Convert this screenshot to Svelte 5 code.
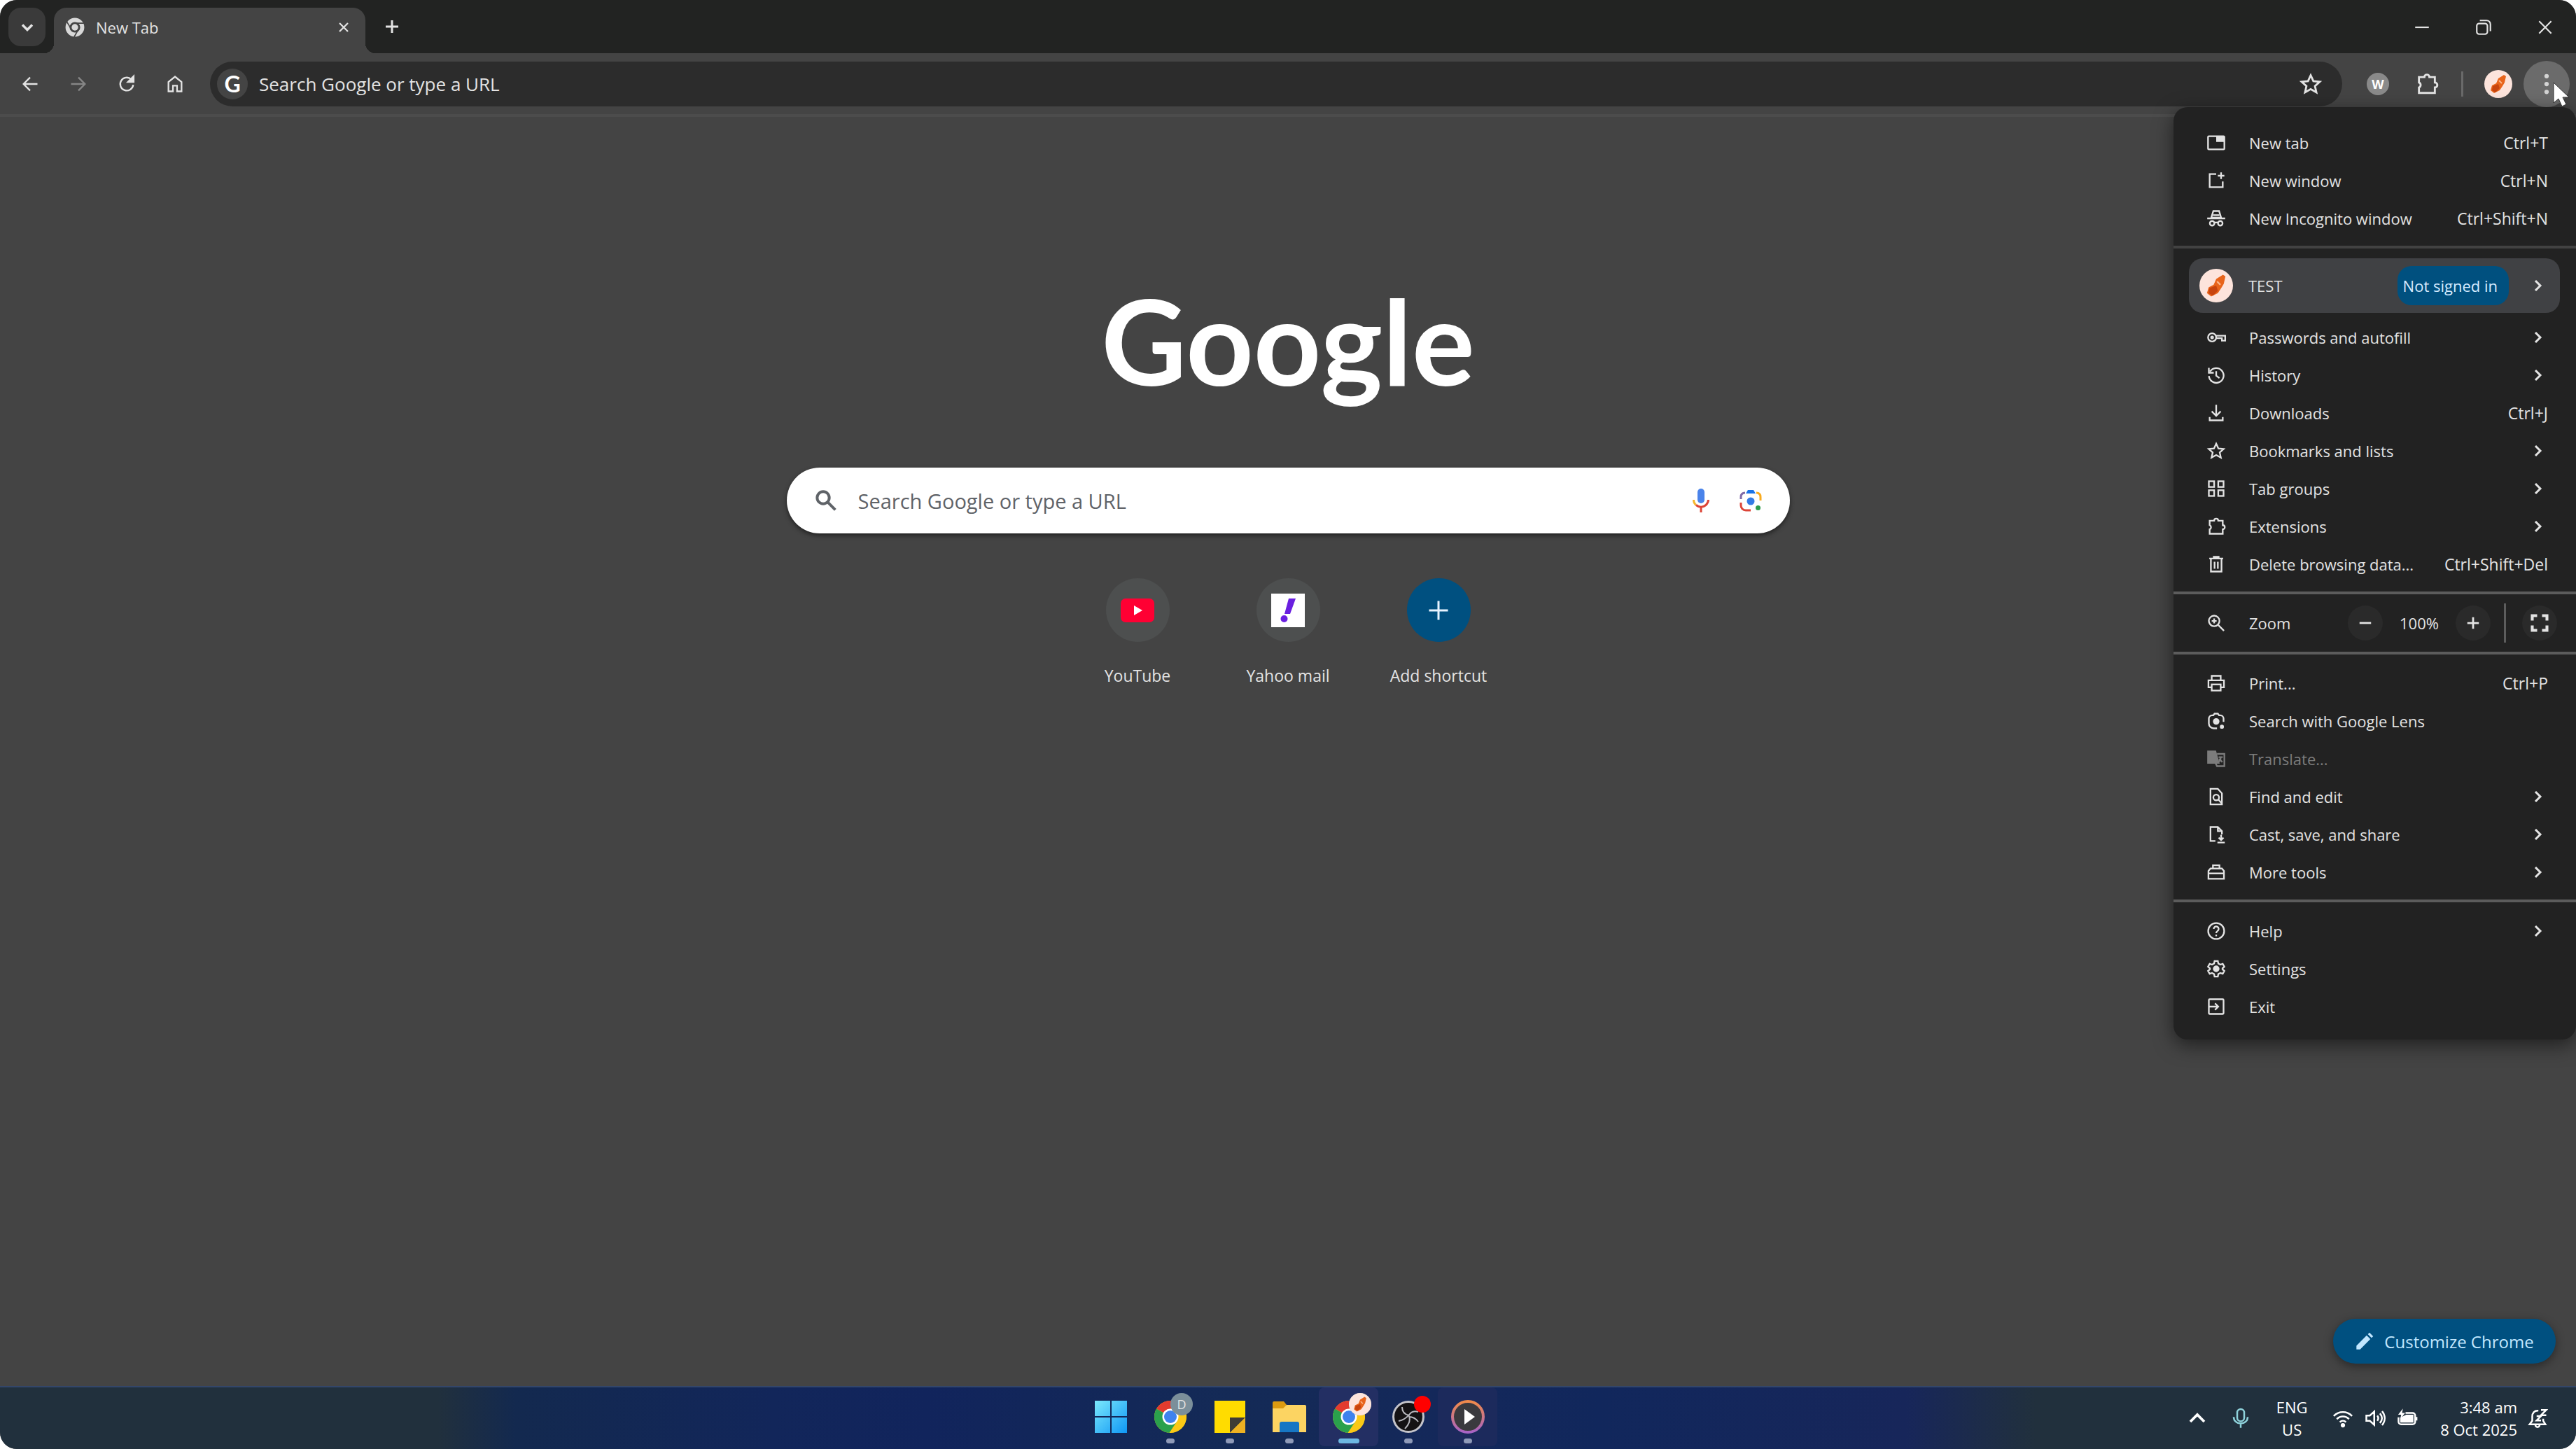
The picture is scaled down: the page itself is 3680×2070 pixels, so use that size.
<script lang="ts">
  type Item = {
    icon: string;
    label: string;
    keys?: string;
    sub?: boolean;
    disabled?: boolean;
  };

  // 24x24 outlines, drawn with the current text colour
  const icons: Record<string, string> = {
    down: "<path d='M6 9l6 6 6-6'/>",
    up: "<path d='M4 16l8-8 8 8'/>",
    right: "<path d='M8 5l7 7-7 7'/>",
    close: "<path d='M4 4l16 16M20 4L4 20'/>",
    plus: "<path d='M12 3v18M3 12h18'/>",
    minus: "<path d='M3 12h18'/>",
    restore:
      "<rect x='3' y='7' width='14' height='14' rx='3'/><path d='M7 3h9a5 5 0 0 1 5 5v9'/>",
    back: "<path d='M21 12H4M12 4l-8 8 8 8'/>",
    forward: "<path d='M3 12h17M12 4l8 8-8 8'/>",
    reload:
      "<path d='M20 13a8 8 0 1 1-2.5-6.8L20 8.500'/><path d='M20.500 2.500v7h-7z' fill='currentColor'/>",
    home: "<path d='M4 21V9.500L12 3l8 6.500V21h-5.500v-7h-5v7z'/>",
    star: "<path d='M12 3.200l2.700 5.900 6.400.7-4.800 4.300 1.400 6.300L12 17.200l-5.700 3.200 1.400-6.300L2.900 9.800l6.400-.7z'/>",
    puzzle:
      "<path d='M4 5h5.500a2.500 2.500 0 0 1 5 0H20v5.500a2.500 2.500 0 0 1 0 5V21H4v-5.500a2.700 2.700 0 0 0 0-5z'/>",
    tab: "<rect x='2' y='4' width='20' height='16' rx='1'/><path d='M13 5h8v5h-8z' fill='currentColor'/>",
    window: "<path d='M12 4H4v16h16v-7M18 2v8M14 6h8'/>",
    incognito:
      "<path d='M1 12h22M6 11l2.500-8h7L18 11z'/><path d='M8 8h8'/><circle cx='7' cy='18' r='2.800'/><circle cx='17' cy='18' r='2.800'/><path d='M10 17h4'/>",
    key: "<circle cx='7' cy='12' r='5'/><circle cx='7' cy='12' r='1.200'/><path d='M12 10h11v6h-4v-3h-7.500'/>",
    history:
      "<path d='M4.500 7.500a9 9 0 1 1-1.400 5.500M3 3v6h6M12 7v5.500l4 3'/>",
    download: "<path d='M12 2v13M6.500 10l5.500 5.500 5.500-5.500M4 17v4h16v-4'/>",
    groups:
      "<rect x='3' y='3' width='6.500' height='7'/><rect x='14.500' y='3' width='6.500' height='7'/><rect x='3' y='14' width='6.500' height='7'/><rect x='14.500' y='14' width='6.500' height='7'/>",
    trash:
      "<path d='M3.500 5h17M9 4.500V3h6v1.500M5.500 5v16h13V5M10 9v8.500M14 9v8.500'/>",
    zoom: "<circle cx='9.500' cy='9.500' r='6.500'/><path d='M14.500 14.500l7 7M6.500 9.500h6M9.500 6.500v6'/>",
    full: "<path d='M3 9V3h6M15 3h6v6M21 15v6h-6M9 21H3v-6' stroke-width='3.500'/>",
    print:
      "<path d='M6.500 8V3h11v5M6 17H2.500V8.500h19V17H18'/><rect x='6.500' y='13.500' width='11' height='7.500'/>",
    lens: "<path d='M3 15V9a4 4 0 0 1 4-4h1.500L10 3h4l1.500 2H17a4 4 0 0 1 4 4v4M3 15a6 6 0 0 0 6 6h4'/><circle cx='12' cy='12.500' r='3' fill='currentColor'/><circle cx='19' cy='19' r='1.500' fill='currentColor'/>",
    translate:
      "<path d='M2 3h9l4 14H2z' fill='currentColor'/><path d='M13 6h9v15h-9l-2-4M15 10h5M17.500 9v1.500c0 3-2 5-3.500 6M15.500 12l4 4'/>",
    find: "<path d='M14 2.500H5v19h14V8z'/><circle cx='12' cy='13' r='3.500'/><path d='M14.500 15.500l4.500 5'/>",
    cast: "<path d='M11 20H5V3h9l5 5v4M14 3v5h5M18 12.500v6M15 16l3 3 3-3M13.500 22h9'/>",
    tools:
      "<path d='M2.500 20V10.500L5 7.500h14l2.500 3V20zM8 7V3.500h8V7M3 13.500h18' />",
    help: "<circle cx='12' cy='12' r='9.800'/><path d='M9 9.500a3 3 0 1 1 4.700 2.400c-1.200.9-1.700 1.300-1.700 2.600M12 16.500v2'/>",
    gear: "<path d='M10 2.500h4l.6 3 2.500 1.400 2.900-1 2 3.500-2.300 2v1.200l2.300 2-2 3.500-2.900-1-2.500 1.400-.6 3h-4l-.6-3-2.500-1.400-2.900 1-2-3.500 2.300-2v-1.200l-2.300-2 2-3.500 2.900 1 2.500-1.400z'/><circle cx='12' cy='12' r='3' fill='currentColor'/>",
    exit: "<rect x='3' y='3' width='18' height='18' rx='1'/><path d='M3 12h11M10.500 8l4 4-4 4'/>",
    search: "<circle cx='9' cy='9' r='6.500'/><path d='M14 14l8 8'/>",
    pencil:
      "<path d='M2 22v-4.500L14.500 5 19 9.500 6.500 22zM16 3.500L18 1.500l4.500 4.500-2 2z' fill='currentColor' stroke='none'/>",
    mic: "<rect x='8' y='1.500' width='8' height='14' rx='4'/><path d='M4 10.500c0 4.500 3.500 7.500 8 7.500s8-3 8-7.500M12 18v5'/>",
    wifi: "<path d='M1.500 9.500c6-6 15-6 21 0M5 13c4-4 10-4 14 0M8.500 16.500c2-2 5-2 7 0'/><circle cx='12' cy='20' r='1.500' fill='currentColor'/>",
    sound:
      "<path d='M2 9v6h4l5 4.500v-15L6 9zM14.500 9c1.500 2 1.500 4 0 6M17.500 6.500c3 3.500 3 7.500 0 11M20 4c4 5 4 11 0 16'/>",
    battery:
      "<path d='M10 6h8a3 3 0 0 1 3 3v7a3 3 0 0 1-3 3H5a3 3 0 0 1-3-3v-5M22.500 10.500v4'/><path d='M5 16v-4l6-3h7v7z' fill='currentColor'/><path d='M7 1L1.500 8H5l-1 5 5.500-7H6z' fill='currentColor' stroke='none'/>",
    bell: "<path d='M13 3.500C8.500 3 6 6 6 10v5l-3 4h18l-2.500-4v-2.500M9.500 19.500c.5 3.500 4.500 3.500 5 0M16 2.500h6l-6 6h6M11 9.500h5l-5 5h5'/>",
  };

  const groups: Item[][] = [
    [
      { icon: "tab", label: "New tab", keys: "Ctrl+T" },
      { icon: "window", label: "New window", keys: "Ctrl+N" },
      { icon: "incognito", label: "New Incognito window", keys: "Ctrl+Shift+N" },
    ],
    [
      { icon: "key", label: "Passwords and autofill", sub: true },
      { icon: "history", label: "History", sub: true },
      { icon: "download", label: "Downloads", keys: "Ctrl+J" },
      { icon: "star", label: "Bookmarks and lists", sub: true },
      { icon: "groups", label: "Tab groups", sub: true },
      { icon: "puzzle", label: "Extensions", sub: true },
      { icon: "trash", label: "Delete browsing data...", keys: "Ctrl+Shift+Del" },
    ],
    [
      { icon: "print", label: "Print...", keys: "Ctrl+P" },
      { icon: "lens", label: "Search with Google Lens" },
      { icon: "translate", label: "Translate...", disabled: true },
      { icon: "find", label: "Find and edit", sub: true },
      { icon: "cast", label: "Cast, save, and share", sub: true },
      { icon: "tools", label: "More tools", sub: true },
    ],
    [
      { icon: "help", label: "Help", sub: true },
      { icon: "gear", label: "Settings" },
      { icon: "exit", label: "Exit" },
    ],
  ];

  let zoom = 100;
  let address = "";
  let query = "";
</script>

{#snippet icon(name: string)}
  <svg class="icon" viewBox="0 0 24 24" aria-hidden="true">{@html icons[name]}</svg>
{/snippet}

{#snippet avatar()}
  <svg class="avatar" viewBox="0 0 40 40" aria-hidden="true">
    <circle cx="20" cy="20" r="20" fill="#fde4dc" />
    <path d="M20 12l8-5 3 2-2 9-3 5-4 6-8 4-5-4 2-7 6-3z" fill="#e8641b" />
    <path d="M12 23l8-3 2 6-6 6-5-3z" fill="#c8440e" />
    <path d="M21 15l4 4" stroke="#fbb58a" stroke-width="2" />
  </svg>
{/snippet}

{#snippet row(item: Item)}
  <button class="row" role="menuitem" disabled={item.disabled}>
    {@render icon(item.icon)}
    <span class="label">{item.label}</span>
    {#if item.keys}
      <span class="keys">{item.keys}</span>
    {/if}
    {#if item.sub}
      <span class="chevron">{@render icon("right")}</span>
    {/if}
  </button>
{/snippet}

{#snippet chrome()}
  <svg class="app-icon" viewBox="0 0 48 48" aria-hidden="true">
    <circle cx="24" cy="24" r="23" fill="#fbc916" />
    <path d="M24 24L4.100 12.500A23 23 0 0 1 43.900 12.500H24z" fill="#e33b2e" />
    <path d="M24 24L4.100 12.500a23 23 0 0 0 18.500 34.400L34 30z" fill="#2aa14c" />
    <path d="M24 12.500h19.900a23 23 0 0 1-21.300 34.400L34 29.700z" fill="#fbc916" />
    <circle cx="24" cy="24" r="11.500" fill="#fff" />
    <circle cx="24" cy="24" r="9" fill="#3f82ee" />
  </svg>
{/snippet}

<div class="screen">
  <header class="tabs">
    <button class="tab-search" aria-label="Search tabs">{@render icon("down")}</button>
    <div class="tab">
      <svg class="favicon" viewBox="0 0 24 24" aria-hidden="true">
        <circle cx="12" cy="12" r="9" fill="none" stroke="#d8d8d8" stroke-width="5" />
        <path d="M12 7h11M7.700 14.500L2 5M16.300 14.500L11 24" stroke="#444" stroke-width="1.500" />
        <circle cx="12" cy="12" r="4" fill="#d8d8d8" />
      </svg>
      <span class="label">New Tab</span>
      <button class="tab-close" aria-label="Close tab">{@render icon("close")}</button>
    </div>
    <button class="tab-add" aria-label="New tab">{@render icon("plus")}</button>
    <div class="caption">
      <button aria-label="Minimize">{@render icon("minus")}</button>
      <button aria-label="Restore">{@render icon("restore")}</button>
      <button aria-label="Close">{@render icon("close")}</button>
    </div>
  </header>

  <nav class="toolbar">
    <button class="nav" aria-label="Back">{@render icon("back")}</button>
    <button class="nav dim" aria-label="Forward">{@render icon("forward")}</button>
    <button class="nav" aria-label="Reload">{@render icon("reload")}</button>
    <button class="nav" aria-label="Home">{@render icon("home")}</button>
    <div class="omnibox">
      <span class="g">G</span>
      <input bind:value={address} placeholder="Search Google or type a URL" aria-label="Address" />
      <button class="bookmark" aria-label="Bookmark this tab">{@render icon("star")}</button>
    </div>
    <button class="tool" aria-label="W extension"><span class="w">W</span></button>
    <button class="tool" aria-label="Extensions">{@render icon("puzzle")}</button>
    <span class="bar"></span>
    <button class="tool profile" aria-label="Profile">{@render avatar()}</button>
    <button class="kebab" aria-label="Menu">
      <svg viewBox="0 0 24 24" aria-hidden="true">
        <circle cx="12" cy="3" r="2.500" />
        <circle cx="12" cy="12" r="2.500" />
        <circle cx="12" cy="21" r="2.500" />
      </svg>
    </button>
  </nav>

  <main>
    <h1>Google</h1>
    <form class="search">
      {@render icon("search")}
      <input bind:value={query} placeholder="Search Google or type a URL" aria-label="Search" />
      <button type="button" class="by-voice" aria-label="Search by voice">
        <svg class="voice" viewBox="0 0 24 34" fill="none" stroke-width="3">
          <rect x="7" y="0" width="10" height="21" rx="5" fill="#4a83ea" />
          <path d="M1.500 16c0 3 1 5.500 3.500 7.500" stroke="#f5b52c" />
          <path d="M5 23.500c4 3.500 10 3.500 14 0 2-2 3.500-4.500 3.500-7.500" stroke="#dc4437" />
          <path d="M12 26v8" stroke="#dc4437" />
        </svg>
      </button>
      <button type="button" aria-label="Search by image">
        <svg class="image" viewBox="0 0 32 32" fill="none" stroke-width="3">
          <path d="M2 14v-3c0-4 2-6 6-6" stroke="#7f6aa8" />
          <path d="M9 6l3-5h8l3 5z" fill="#1a73e8" />
          <path d="M24 5c4 0 6 2 6 6v5" stroke="#f9ab1f" />
          <path d="M2 19v4c0 4 3 7 7 7h7" stroke="#dc4437" />
          <circle cx="16" cy="17" r="5.500" fill="#347be5" />
          <circle cx="26.500" cy="26.500" r="3.500" fill="#2c9b4b" />
        </svg>
      </button>
    </form>
    <div class="shortcuts">
      <a href="#youtube">
        <span class="disc">
          <svg class="youtube" viewBox="0 0 48 34" aria-hidden="true">
            <rect width="48" height="34" rx="7" fill="#ff0033" />
            <path d="M19 10l12 7-12 7z" fill="#fff" />
          </svg>
        </span>
        YouTube
      </a>
      <a href="#mail">
        <span class="disc">
          <svg class="yahoo" viewBox="0 0 48 48" aria-hidden="true">
            <rect width="48" height="48" fill="#fff" />
            <path d="M25 7h10l-8 22h-8z" fill="#6a1fe0" />
            <circle cx="18.500" cy="36" r="5" fill="#6a1fe0" />
          </svg>
        </span>
        Yahoo mail
      </a>
      <button>
        <span class="disc add">{@render icon("plus")}</span>
        Add shortcut
      </button>
    </div>
    <button class="customize">{@render icon("pencil")}Customize Chrome</button>
  </main>

  <footer class="taskbar">
    <div class="apps">
      <button aria-label="Start">
        <svg class="app-icon" viewBox="0 0 48 48">
          <defs>
            <linearGradient id="win" x1="0" y1="0" x2="1" y2="1">
              <stop offset="0" stop-color="#7be8fb" />
              <stop offset="1" stop-color="#0f97f5" />
            </linearGradient>
          </defs>
          <path d="M1 1h22v22H1zM25 1h22v22H25zM1 25h22v22H1zM25 25h22v22H25z" fill="url(#win)" />
        </svg>
      </button>
      <button class="open" aria-label="Chrome, D">
        {@render chrome()}
        <span class="badge">D</span>
      </button>
      <button class="open" aria-label="Sticky Notes">
        <svg class="app-icon" viewBox="0 0 48 48">
          <path d="M2 1h44v24L25 47H2z" fill="#ffdc00" />
          <path d="M24 25h22L24 47z" fill="#3f3b35" />
          <path d="M46 25v22H24z" fill="#eeb122" />
        </svg>
      </button>
      <button class="open" aria-label="File Explorer">
        <svg class="app-icon" viewBox="0 0 48 48">
          <path d="M0 4q0-2 2-2h14l4 5-4 6H0z" fill="#dc9a10" />
          <path d="M0 12h15l5-5h26q2 0 2 2v37H0z" fill="#fcd462" />
          <path d="M10 46V34q0-3 3-3h22q3 0 3 3v12z" fill="#1676c4" />
        </svg>
      </button>
      <button class="open active" aria-label="Chrome, TEST">
        {@render chrome()}
        <span class="badge">{@render avatar()}</span>
      </button>
      <button class="open" aria-label="OBS Studio">
        <svg class="app-icon" viewBox="0 0 48 48">
          <circle cx="24" cy="24" r="21.500" fill="#141214" stroke="#c4c4ca" stroke-width="3" />
          <path
            d="M15 10c0 8 5 11 10 12M38 17c-6-2-11 0-14 6M25 23c2 6 0 12-6 18M10 30c5-1 10-3 14-8M38 31c-3-4-8-7-13-7"
            fill="none"
            stroke="#b8b8be"
            stroke-width="2"
          />
        </svg>
        <span class="badge rec"></span>
      </button>
      <button class="open media" aria-label="Media Player">
        <svg class="app-icon" viewBox="0 0 48 48">
          <defs>
            <linearGradient id="ring" x1="0" y1="0" x2="0" y2="1">
              <stop offset="0" stop-color="#f08a4a" />
              <stop offset="1" stop-color="#a763c4" />
            </linearGradient>
          </defs>
          <circle cx="24" cy="24" r="22" fill="#3a3a3e" stroke="url(#ring)" stroke-width="4" />
          <path d="M19 13l15 11-15 11z" fill="#fff" />
        </svg>
      </button>
    </div>
    <div class="tray">
      <button class="hidden-icons" aria-label="Hidden icons">{@render icon("up")}</button>
      <button class="rec-mic" aria-label="Microphone in use">{@render icon("mic")}</button>
      <button class="lang">ENG<br />US</button>
      <button class="status" aria-label="Network, volume, battery">
        {@render icon("wifi")}
        {@render icon("sound")}
        {@render icon("battery")}
      </button>
      <button class="clock">3:48 am<br />8 Oct 2025</button>
      <button aria-label="Notifications">{@render icon("bell")}</button>
    </div>
  </footer>

  <div class="menu" role="menu">
    {#each groups[0] as item}
      {@render row(item)}
    {/each}
    <hr class="soft" />
    <button class="account" role="menuitem">
      {@render avatar()}
      <span class="label">TEST</span>
      <span class="pill">Not signed in</span>
      <span class="chevron">{@render icon("right")}</span>
    </button>
    {#each groups[1] as item}
      {@render row(item)}
    {/each}
    <hr class="flush" />
    <div class="zoom">
      {@render icon("zoom")}
      <span class="label">Zoom</span>
      <button aria-label="Zoom out" on:click={() => (zoom -= 10)}>{@render icon("minus")}</button>
      <span class="percent">{zoom}%</span>
      <button aria-label="Zoom in" on:click={() => (zoom += 10)}>{@render icon("plus")}</button>
      <span class="split"></span>
      <button class="full" aria-label="Full screen">{@render icon("full")}</button>
    </div>
    <hr class="top" />
    {#each groups[2] as item}
      {@render row(item)}
    {/each}
    <hr />
    {#each groups[3] as item}
      {@render row(item)}
    {/each}
  </div>

  <svg class="cursor" viewBox="0 0 24 36" aria-hidden="true">
    <path d="M1 1v29l7-6 5 11 6-3-5-10h9z" fill="#fff" stroke="#333" />
  </svg>
</div>

<style>
  :global(body) {
    background: #fff;
  }

  .screen {
    position: relative;
    display: flex;
    flex-direction: column;
    min-height: 100vh;
    overflow: hidden;
    border-radius: 24px;
    background: #444;
    color: #e3e3e3;
    font-family: "Open Sans", "Noto Sans", sans-serif;
    font-size: 22px;
  }

  button,
  input {
    padding: 0;
    border: 0;
    background: transparent;
    color: inherit;
    font: inherit;
  }

  button {
    display: flex;
    align-items: center;
    justify-content: center;
  }

  a {
    color: inherit;
    text-decoration: none;
  }

  .icon {
    width: 28px;
    height: 28px;
    flex: none;
    fill: none;
    stroke: currentColor;
    stroke-width: 2;
  }

  .label {
    flex: 1;
    text-align: left;
  }

  .avatar {
    display: block;
    width: 40px;
    height: 40px;
  }

  /* tab strip */
  .tabs {
    display: flex;
    align-items: flex-start;
    height: 76px;
    padding-left: 12px;
    box-sizing: border-box;
    background: #222322;
  }

  .tab-search {
    width: 53px;
    height: 55px;
    margin-top: 11px;
    border-radius: 18px;
    background: #3a3a3a;
  }

  .tab-search .icon {
    stroke-width: 3;
  }

  .tab {
    position: relative;
    display: flex;
    align-items: center;
    gap: 16px;
    width: 445px;
    height: 65px;
    margin: 11px 0 0 12px;
    padding: 0 22px 10px 16px;
    box-sizing: border-box;
    border-radius: 18px 18px 0 0;
    background: #444;
  }

  .tab::before,
  .tab::after {
    content: "";
    position: absolute;
    bottom: 0;
    width: 14px;
    height: 14px;
  }

  .tab::before {
    right: 100%;
    background: radial-gradient(circle at 0 0, transparent 14px, #444 14px);
  }

  .tab::after {
    left: 100%;
    background: radial-gradient(circle at 100% 0, transparent 14px, #444 14px);
  }

  .favicon {
    width: 28px;
    height: 28px;
  }

  .tab-close .icon {
    width: 18px;
    height: 18px;
    stroke-width: 3;
  }

  .tab-add {
    width: 48px;
    height: 54px;
    margin: 11px 0 0 14px;
  }

  .tab-add .icon {
    width: 24px;
    height: 24px;
    stroke-width: 3;
  }

  .caption {
    display: flex;
    margin-left: auto;
  }

  .caption button {
    width: 88px;
    height: 78px;
  }

  .caption .icon {
    width: 26px;
    height: 26px;
  }

  /* toolbar */
  .toolbar {
    display: flex;
    align-items: center;
    height: 91px;
    padding: 0 9px 0 8px;
    box-sizing: border-box;
    border-bottom: 4px solid #4c4c4c;
    background: #444;
  }

  .nav {
    width: 69px;
    height: 64px;
  }

  .dim {
    color: #868686;
  }

  .omnibox {
    display: flex;
    flex: 1;
    align-items: center;
    height: 64px;
    margin: 0 16px;
    padding: 0 28px 0 10px;
    border-radius: 32px;
    background: #2c2c2c;
    font-size: 26px;
  }

  .g {
    display: grid;
    place-items: center;
    width: 44px;
    height: 44px;
    border-radius: 50%;
    background: #444;
    color: #fff;
    font: 700 32px/44px Lato, sans-serif;
  }

  .omnibox input {
    flex: 1;
    margin-left: 16px;
    outline: 0;
  }

  input::placeholder {
    color: inherit;
    opacity: 1;
  }

  .bookmark .icon {
    width: 34px;
    height: 34px;
  }

  .tool {
    width: 70px;
    height: 64px;
  }

  .tool .icon {
    width: 34px;
    height: 34px;
  }

  .tool.profile {
    width: 72px;
  }

  .w {
    width: 32px;
    height: 32px;
    border-radius: 50%;
    background: #8a8a8a;
    color: #fff;
    font: 700 18px/32px "Open Sans", sans-serif;
  }

  .bar {
    width: 3px;
    height: 36px;
    margin: 0 14px;
    background: #6a6a6a;
  }

  .kebab {
    width: 66px;
    height: 66px;
    border-radius: 50%;
    background: #6b6b6b;
  }

  .kebab svg {
    width: 30px;
    height: 30px;
    fill: #d4d4d4;
  }

  /* new tab page */
  main {
    position: relative;
    display: flex;
    flex: 1;
    flex-direction: column;
    align-items: center;
  }

  h1 {
    margin: 217px 0 0;
    color: #fff;
    font: 700 168px/204px Lato, sans-serif;
  }

  .search {
    display: flex;
    align-items: center;
    gap: 30px;
    width: 1433px;
    height: 94px;
    margin-top: 80px;
    padding: 0 40px;
    box-sizing: border-box;
    border-radius: 47px;
    background: #fff;
    box-shadow: 0 3px 6px #222;
    color: #5f6368;
    font-size: 29px;
  }

  .search .icon {
    width: 32px;
    height: 32px;
    stroke-width: 3;
  }

  .search input {
    flex: 1;
    outline: 0;
  }

  .by-voice {
    margin-right: 13px;
  }

  .voice {
    width: 24px;
    height: 34px;
  }

  .image {
    width: 32px;
    height: 32px;
  }

  .shortcuts {
    display: flex;
    margin-top: 64px;
  }

  .shortcuts > * {
    display: flex;
    flex-direction: column;
    align-items: center;
    gap: 32px;
    width: 215px;
    line-height: 32px;
    font-size: 23px;
  }

  .disc {
    display: grid;
    place-items: center;
    width: 91px;
    height: 91px;
    border-radius: 50%;
    background: #4d4f4f;
  }

  .add {
    background: #005080;
    color: #e8f4ff;
  }

  .add .icon {
    width: 36px;
    height: 36px;
  }

  .youtube {
    width: 48px;
    height: 34px;
  }

  .yahoo {
    width: 48px;
    height: 48px;
  }

  .customize {
    position: absolute;
    right: 29px;
    bottom: 32px;
    gap: 14px;
    width: 318px;
    height: 64px;
    border-radius: 32px;
    background: #005080;
    box-shadow: 0 4px 14px #0006;
    color: #c2e7ff;
    font-size: 24px;
  }

  /* taskbar */
  .taskbar {
    display: grid;
    grid-template-columns: 1fr auto 1fr;
    height: 90px;
    box-sizing: border-box;
    border-top: 2px solid #33466a;
    background: linear-gradient(
      90deg,
      #21303d 0%,
      #21303d 17%,
      #13294f 20%,
      #12265a 30%,
      #11245c 36%,
      #142a56 48%,
      #14285a 56%,
      #11275c 62%,
      #17265a 74%,
      #21303d 79%,
      #21303d 100%
    );
  }

  .apps {
    grid-column: 2;
    display: flex;
    padding-left: 3px;
  }

  .apps button {
    position: relative;
    width: 85px;
    height: 84px;
    border-radius: 8px;
  }

  .app-icon {
    width: 48px;
    height: 48px;
  }

  .open::after {
    content: "";
    position: absolute;
    bottom: 4px;
    width: 12px;
    height: 7px;
    border-radius: 4px;
    background: #8f9ab8;
  }

  .apps .active {
    background: #232f63;
  }

  .active::after {
    width: 30px;
    background: #6cb8e2;
  }

  .apps .media {
    background: #1c2a5c;
  }

  .badge {
    position: absolute;
    top: 8px;
    right: 10px;
    width: 32px;
    height: 32px;
    border-radius: 50%;
    background: #7b8f9a;
    font-size: 18px;
    line-height: 32px;
  }

  .badge .avatar {
    width: 32px;
    height: 32px;
  }

  .badge.rec {
    top: 12px;
    width: 24px;
    height: 24px;
    background: #f00;
  }

  .tray {
    display: flex;
    align-items: center;
    justify-content: flex-end;
    padding-right: 38px;
    color: #fff;
    line-height: 32px;
  }

  .tray button {
    width: 34px;
    height: 84px;
  }

  .tray .rec-mic {
    margin-left: 28px;
    color: #8fd3dc;
  }

  .tray .icon {
    width: 30px;
    height: 30px;
  }

  .hidden-icons .icon {
    stroke-width: 3;
  }

  .tray .lang {
    width: 60px;
    margin-left: 26px;
  }

  .tray .status {
    gap: 16px;
    width: auto;
    margin-left: 28px;
  }

  .tray .clock {
    width: auto;
    margin: 0 12px 0 32px;
    text-align: right;
  }

  /* browser menu */
  .menu {
    position: absolute;
    top: 153px;
    right: 0;
    width: 575px;
    padding: 24px 0 20px;
    box-sizing: border-box;
    border-radius: 20px;
    background: #222;
    box-shadow: 0 8px 28px #0008;
  }

  .row {
    gap: 33px;
    width: 100%;
    height: 54px;
    padding: 0 40px 0 47px;
  }

  .row:disabled {
    color: #7c7c7c;
  }

  .keys {
    font-size: 23px;
  }

  .chevron {
    display: grid;
    place-items: center;
    width: 28px;
    height: 28px;
  }

  .chevron .icon {
    width: 24px;
    height: 24px;
    stroke-width: 3;
  }

  hr {
    height: 4px;
    margin: 12px 0 14px;
    border: 0;
    background: #5c5c5c;
  }

  .soft {
    background: #424242;
  }

  .flush {
    margin-bottom: 0;
  }

  .top {
    margin-top: 0;
  }

  .account {
    gap: 22px;
    width: 530px;
    height: 78px;
    margin: 0 22px 8px;
    padding: 0 17px 0 15px;
    border-radius: 20px;
    background: #404144;
  }

  .account .avatar {
    width: 48px;
    height: 48px;
  }

  .pill {
    margin-right: 6px;
    padding: 0 16px 0 8px;
    border-radius: 20px;
    background: #00507f;
    color: #d6ebff;
    line-height: 56px;
  }

  .zoom {
    display: flex;
    align-items: center;
    height: 82px;
    padding: 0 27px 0 47px;
  }

  .zoom .label {
    margin-left: 33px;
  }

  .zoom button {
    width: 50px;
    height: 50px;
    border-radius: 50%;
    background: #2a2a2a;
  }

  .zoom button .icon {
    width: 22px;
    height: 22px;
    stroke-width: 3;
  }

  .zoom .full .icon {
    width: 28px;
    height: 28px;
  }

  .percent {
    width: 104px;
    text-align: center;
  }

  .split {
    width: 3px;
    height: 56px;
    margin: 0 23px 0 19px;
    background: #5c5c5c;
  }

  .cursor {
    position: absolute;
    top: 117px;
    right: 9px;
    width: 24px;
    height: 36px;
  }
</style>
